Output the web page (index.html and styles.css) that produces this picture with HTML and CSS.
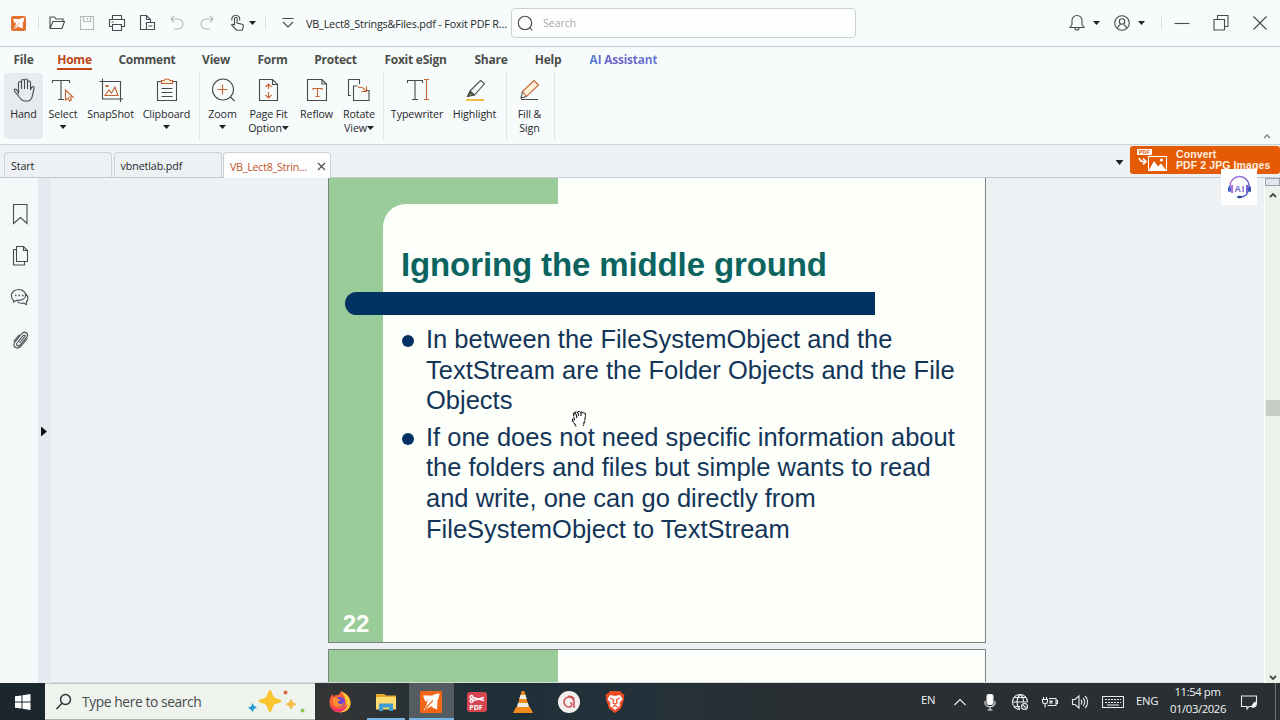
FILE: index.html
```
<!DOCTYPE html>
<html lang="en">
<head>
    <meta charset="UTF-8">
    <meta name="viewport" content="width=device-width, initial-scale=1.0">
    <title>VB_Lect8_Strings&amp;Files.pdf - Foxit PDF Reader</title>
    <link rel="stylesheet" href="styles.css">
</head>
<body>
    <header class="titlebar">
        <svg class="logo" width="15" height="15" viewBox="1 1 22 22"><rect x="1" y="1" width="22" height="22" rx="3" fill="#e2712f"/><path d="M20.500 3.500C13 4 8 8 8 14l-3.500 6.500L11 17c6-2 9-7 9.500-13.500zM4 5.500h8.500L6.500 12zM18.500 11.500L18 19.500l-5.500-2.500z" fill="#fff"/><path d="M6 19l8-8.500" stroke="#e2712f"/></svg>
        <span class="sep"></span>
        <div class="quick">
            <svg width="18" height="18" viewBox="0 0 18 18"><path d="M2 14.500V3h4.500l1.500 2h7v2.500M2 14.500L5 7.500h11.500L14 14.500z"/></svg>
            <svg class="off" width="18" height="18" viewBox="0 0 18 18"><path d="M2.500 2.500h13v13h-13zM5.500 2.500v5h7v-5M9.500 4v2"/></svg>
            <svg width="18" height="18" viewBox="0 0 18 18"><path d="M4.500 5.500v-4h9v4M4.500 12.500h-3v-7h15v7h-3M4.500 10.500h9v6h-9zM3.500 8h2"/></svg>
            <svg width="18" height="18" viewBox="0 0 18 18"><path d="M8 15.500H2.500v-14h6l4 4v3M8.500 1.500v4h4M8.500 8.500h8v7h-8zM10.500 12h4"/></svg>
            <svg class="off" width="18" height="18" viewBox="0 0 18 18"><path d="M6 2L3 5l3 3M3 5h7a5 5 0 0 1 0 10H6"/></svg>
            <svg class="off" width="18" height="18" viewBox="0 0 18 18"><path d="M12 2l3 3-3 3M15 5H8a5 5 0 0 0 0 10h4"/></svg>
            <svg width="18" height="18" viewBox="0 0 18 18"><path d="M6.500 11V4.500a1.300 1.300 0 0 1 2.600 0V9l5 1.200c1.500.4 1.400 1.500 1 3l-.8 3H8.500L3.500 11c.8-1.200 2-1 3 .5M4 6.500a4 4 0 1 1 7.600 0"/></svg>
        </div>
        <span class="caret caret-touch"></span>
        <span class="sep sep-quick"></span>
        <svg class="more" width="14" height="12" viewBox="0 0 14 12"><path d="M1.500 1.500h11M2 5l5 5 5-5"/></svg>
        <div class="doc-name">VB_Lect8_Strings&amp;Files.pdf - Foxit PDF R...</div>
        <div class="search">
            <svg width="17" height="17" viewBox="0 0 17 17"><circle cx="8" cy="8" r="6.700"/><path d="M12.800 12.800l2.500 2.500"/></svg>
            <span>Search</span>
        </div>
        <div class="account">
            <svg width="18" height="18" viewBox="0 0 18 18"><path d="M2 13.500h14l-2-3V6.500a5 5 0 0 0-10 0v4zM7 14a2 2 0 0 0 4 0"/></svg>
            <span class="caret"></span>
            <svg width="18" height="18" viewBox="0 0 18 18"><circle cx="9" cy="9" r="7.300"/><circle cx="9" cy="7.500" r="2.700"/><path d="M4.500 14c.5-2 1.500-3 3-3.600M13.500 14c-.5-2-1.500-3-3-3.600"/></svg>
            <span class="caret"></span>
        </div>
        <span class="sep"></span>
        <div class="window-buttons">
            <svg width="18" height="18" viewBox="0 0 18 18"><path d="M1.500 9.500h15"/></svg>
            <svg width="18" height="18" viewBox="0 0 18 18"><path d="M2 5.500h10.500V16H2zM5.500 5.500v-4H16v11h-3.500"/></svg>
            <svg width="18" height="18" viewBox="0 0 18 18"><path d="M2.500 2.500l13 13M15.500 2.500l-13 13"/></svg>
        </div>
    </header>

    <section class="ribbon">
        <nav class="menu">
            <span>File</span>
            <span class="current">Home</span>
            <span>Comment</span>
            <span>View</span>
            <span>Form</span>
            <span>Protect</span>
            <span>Foxit eSign</span>
            <span>Share</span>
            <span>Help</span>
            <span class="ai">AI Assistant</span>
        </nav>
        <div class="tools">
            <div class="group group-basic">
                <div class="tool selected">
                    <svg width="26" height="26" viewBox="0 0 26 26"><path d="M7.500 16V6a1.500 1.500 0 0 1 3 0v6V4a1.500 1.500 0 0 1 3 0v8V3.500a1.500 1.500 0 0 1 3 0V12V5.500a1.500 1.500 0 0 1 3 0V13l1-2.500c1-1.500 3-.8 2.500.8l-1.500 7c-.8 4-2.500 5.700-5 5.700h-3c-2 0-3-.8-4.500-3l-5.500-7c-.8-1.500.7-2.500 2-1.500z"/></svg>
                    <span>Hand</span>
                </div>
                <div class="tool">
                    <svg width="26" height="26" viewBox="0 0 26 26"><path d="M2.500 6V3.500h17V6M11 3.500v19M8 22.500h6"/><path class="accent" d="M15.500 13v10l2.500-2 1.500 3 2-1-1.500-3h3z"/></svg>
                    <span>Select</span>
                    <i class="caret"></i>
                </div>
                <div class="tool">
                    <svg width="26" height="26" viewBox="0 0 26 26"><path d="M1.500 4.500h21V25M4.500 1.500v20.500H25"/><path class="accent" d="M7 18.500l4-5.500 2.500 3 3.500-6 3 8.500zM8 8.500h2v1H8z"/></svg>
                    <span>SnapShot</span>
                </div>
                <div class="tool">
                    <svg width="26" height="26" viewBox="0 0 26 26"><path d="M7.500 4.500h-4v19h19v-19h-4M7.500 11.500h11M7.500 15.500h11M7.500 19.500h11"/><path class="accent peach" d="M7.500 6.500V3.500H10c.5-2 5.500-2 6 0h2.500v3z"/></svg>
                    <span>Clipboard</span>
                    <i class="caret"></i>
                </div>
            </div>
            <div class="group group-view">
                <div class="tool">
                    <svg width="26" height="26" viewBox="0 0 26 26"><circle cx="13" cy="12.500" r="10.500"/><path d="M20.500 20l4 4"/><path class="accent" d="M12.500 7.500v10M7.500 12.500h10"/></svg>
                    <span>Zoom</span>
                    <i class="caret"></i>
                </div>
                <div class="tool">
                    <svg width="26" height="26" viewBox="0 0 26 26"><path d="M3.500 2.500h13l5 5v16h-18zM16.500 2.500v5h5"/><path class="accent" d="M12.500 7v5M9.500 10l3-3 3 3M12.500 15v6M9.500 18l3 3 3-3"/></svg>
                    <span>Page Fit<br>Option<i class="caret"></i></span>
                </div>
                <div class="tool">
                    <svg width="26" height="26" viewBox="0 0 26 26"><path d="M3.500 2.500h14.500l4.500 4.500v16.500h-19zM18 2.500v4.500h4.500"/><path class="accent" d="M9 13V11.500h9V13M13.500 11.500v8M11.500 19.500h4"/></svg>
                    <span>Reflow</span>
                </div>
                <div class="tool">
                    <svg width="26" height="26" viewBox="0 0 26 26"><path d="M5 18.500H2.500V2.500h11V7M7.500 13V23.500h15.500V13.500h-3M7.500 13V9h4"/><path class="accent" d="M12 10.500c4-1 6 .5 7.500 3.500M20.500 9.500v5h-5"/></svg>
                    <span>Rotate<br>View<i class="caret"></i></span>
                </div>
            </div>
            <div class="group group-text">
                <div class="tool">
                    <svg width="26" height="26" viewBox="0 0 26 26"><path d="M3.500 6V3.500h15V6M11 3.500v19M8 22.500h6"/><path class="accent" d="M20 2.500h5M22.500 2.500v20M20 22.500h5"/></svg>
                    <span>Typewriter</span>
                </div>
                <div class="tool">
                    <svg width="26" height="26" viewBox="0 0 26 26"><path d="M8 14L18.500 3.500l4 3L12.500 18zM8 14l-2.500 5.500 7-1.500"/><path d="M6 19l2-4 3 3z" fill="#b5a92d"/><path d="M4 23h18" stroke="#edbb43" stroke-width="2"/></svg>
                    <span>Highlight</span>
                </div>
            </div>
            <div class="group group-sign">
                <div class="tool">
                    <svg width="26" height="26" viewBox="0 0 26 26"><path class="accent peach" d="M5.500 14.500L17 3.500l4.500 4.500L9.500 19.500z"/><path d="M5.500 14.500l-1.500 6.500 5.500-1.500M4 22.500h17"/></svg>
                    <span>Fill &amp;<br>Sign</span>
                </div>
            </div>
            <svg class="collapse" width="10" height="8" viewBox="0 0 10 8"><path d="M2 6l3-3 3 3"/></svg>
        </div>
    </section>

    <div class="tabs">
        <div class="tab">Start</div>
        <div class="tab">vbnetlab.pdf</div>
        <div class="tab active">
            <span>VB_Lect8_Strin...</span>
            <svg width="9" height="9" viewBox="0 0 9 9"><path d="M1 1l7 7M8 1L1 8"/></svg>
        </div>
        <span class="caret"></span>
        <div class="promo">
            <svg width="32" height="24" viewBox="0 0 32 24"><rect y="1" width="15" height="6" rx="1" fill="#fff"/><text x="1.800" y="6">PDF</text><path d="M2 10c1 3 3 4 6 3.500M6 10.500l3 3-3 3" fill="none" stroke="#fff" stroke-width="1.600"/><rect x="11.500" y="8.500" width="18" height="14" fill="none" stroke="#fff"/><path d="M12 22l5-9 4 5.500 3-3 5 6.500z" fill="#fff"/><circle cx="24.500" cy="12" r="1.600" fill="#fff"/></svg>
            <div class="promo-text"><span>Convert</span><span>PDF 2 JPG Images</span></div>
            <div class="ai-badge">
                <svg width="26" height="26" viewBox="0 0 26 26"><defs><linearGradient id="ai" x2="1" y2="1"><stop stop-color="#bd77dc"/><stop offset="1" stop-color="#3858c7"/></linearGradient></defs><path d="M4 12a9.500 9.500 0 0 1 19 0M22 16c0 4-3 7-8 7" fill="none" stroke="url(#ai)" stroke-width="1.600"/><rect x="2" y="12" width="3" height="6" rx="1.500" fill="#4668cb"/><rect x="22" y="12" width="3" height="6" rx="1.500" fill="#3850ba"/><rect x="5" y="11" width="2" height="8" fill="#ae73d8"/><rect x="20" y="11" width="2" height="8" fill="#7c5ed4"/><ellipse cx="13.500" cy="23" rx="2.500" ry="1.300" fill="#2c458f"/><text x="8.600" y="18.300">AI</text></svg>
            </div>
        </div>
    </div>

    <main class="viewer">
        <aside class="sidebar">
            <svg width="20" height="22" viewBox="0 0 20 22"><path d="M3.500 1.500h13.500v19l-6.500-6-7 6z"/></svg>
            <svg width="20" height="22" viewBox="0 0 20 22"><path d="M6.500 1.500h7l4 4V16.500h-11zM13.500 1.500v4h4M6.500 4.500h-3v15.500H14.500V17"/></svg>
            <svg width="20" height="22" viewBox="0 0 20 22"><path d="M3.500 13.500c-3-3-2.800-7.200.5-9.500 4-2.800 10-1.500 11.500 3 1 4-3 6.800-9 6.300L3.500 15zM15.800 7c3 2.500 2.500 6 .5 8v2.500l-3-1.500c-3 .7-4.700 0-6-1.500"/><path d="M5 8.500h1.500M8.500 8.500h1.500M12 8.500h1.500" stroke-width="1.500"/></svg>
            <svg width="20" height="22" viewBox="0 0 20 22"><path d="M17.500 9.500l-7 8c-3.500 3.500-8.500 0-5.700-4.300L12 4.500c2.800-3 7.200 0 5 3.500l-7 8c-2 2-4.500 0-3-2l6.500-7.500c1-1 2.500 0 1.500 1.200l-5.500 6.300M3.500 12.500l6-6.800"/></svg>
        </aside>
        <div class="splitter"><span></span></div>
        <div class="canvas">
            <article class="slide">
                <div class="slide-top"></div>
                <div class="slide-body">
                    <div class="slide-number">22</div>
                    <div class="slide-content">
                        <h1>Ignoring the middle ground</h1>
                        <div class="rule"></div>
                        <ul>
                            <li>In between the FileSystemObject and the<br>TextStream are the Folder Objects and the File<br>Objects</li>
                            <li>If one does not need specific information about<br>the folders and files but simple wants to read<br>and write, one can go directly from<br>FileSystemObject to TextStream</li>
                        </ul>
                        <svg class="cursor" width="18" height="18" viewBox="0 0 18 18"><path d="M5 16.500c0-2-3-4-3.500-6-.3-1.500 1-2 2-.5L2.500 5c-.3-2 1.500-2.500 2-.8L3.800 3.500C4 1.500 6 1.300 6.500 3c.3-2 2.800-2 3 0 .5-1.600 2.700-1.300 2.700.5 1.200-1 2.800-.2 2.300 1.500l-.6 5c-.5 2-1.400 3.500-1.400 6" stroke-dasharray="4 .6"/><path d="M5 4l1 4M7 3l.7 3M10 3v3"/></svg>
                    </div>
                </div>
            </article>
            <article class="slide next"><div class="slide-top"></div></article>
        </div>
        <div class="scrollbar">
            <div class="split-box"></div>
            <svg width="10" height="8" viewBox="0 0 10 8"><path d="M2 6l3-3 3 3"/></svg>
            <div class="thumb"></div>
            <svg width="10" height="8" viewBox="0 0 10 8"><path d="M2 2l3 3 3-3"/></svg>
        </div>
    </main>

    <footer class="taskbar">
        <div class="start">
            <svg width="16" height="16" viewBox="0 0 16 16"><path d="M0 2.300L6.500 1.400v6.100H0zM7.500 1.200L15.500 0v7.500h-8zM0 8.500h6.500v6.100L0 13.700zM7.500 8.500h8V16l-8-1.200z" fill="#fff"/></svg>
        </div>
        <div class="task-search">
            <svg width="18" height="18" viewBox="0 0 18 18"><circle cx="10.500" cy="6.500" r="5"/><path d="M7 10.200L1.500 16"/></svg>
            <span>Type here to search</span>
            <svg class="sparkles" width="58" height="26" viewBox="0 0 58 26"><path d="M22 1c2 0 2.500 6 4.500 7.500s7 1.500 7 3.500-5 2-7 3.500-2.500 7.500-4.500 7.500-2.500-6-4.500-7.500-7-1.500-7-3.500 5-2 7-3.500 2.500-7.500 4.500-7.500z" fill="#f9c62f"/><path d="M43 10c1.300 0 1.200 2.700 2.200 3.400s3 .8 3 1.800-2 1.100-3 1.800-.9 3.200-2.200 3.200-1.200-2.500-2.200-3.200-3-.8-3-1.800 2-1.100 3-1.800.9-3.400 2.200-3.400z" fill="#f4bd48"/><path d="M4.500 14l1.500 2.700 3 1.800-3 1.500-1.500 3-1.800-2.500-2.700-2 3-1z" fill="#279bd3"/><circle cx="37.500" cy="3.500" r="1.900" fill="#da6543"/><circle cx="54.500" cy="21.500" r="2" fill="#8fc65a"/></svg>
        </div>
        <div class="apps">
            <div class="app">
                <svg width="24" height="24" viewBox="0 0 24 24"><path d="M12 22.500C5 22.500 1.500 17.500 1.500 12c0-3 1-6 3-8l1 3 2-2c2 0 3 0 4-1l1-2.500c5 1 9.500 5 10 10 .5 6.500-4 11-10.500 11z" fill="#fa6038"/><path d="M13 1c6 3 9.500 7 9.500 12 0 6-5 9.500-10.500 9.500 8-4 8-12 1-21.500z" fill="#ffca3a"/><path d="M2 14c3 6 14 8 18-1-2 11-15 12-18 1z" fill="#f02b72"/><circle cx="12" cy="12" r="5" fill="#7049cf"/><path d="M5 8c3-1 4 0 5 1 3 0 2 2-.5 3 1 3 5 3 7 0-1 6-10 6-11.500 1z" fill="#ff9030"/></svg>
            </div>
            <div class="app open">
                <svg width="24" height="24" viewBox="0 0 24 24"><path d="M2 4h8l2 1.500h10V9H2z" fill="#e6a82c"/><path d="M2 7h20v12.500H2z" fill="#ffdb72"/><path d="M5 13.500h14V21h-4v-3.500H9V21H5z" fill="#3d9dd0"/></svg>
            </div>
            <div class="app open focused">
                <svg width="24" height="24" viewBox="0 0 24 24"><rect x="1" y="1" width="22" height="22" rx="1" fill="#f26516"/><path d="M20.500 3.500C13 4 8 8 8 14l-3.500 6.500L11 17c6-2 9-7 9.500-13.500zM4 5.500h8.500L6.500 12zM18.500 11.500L18 19.500l-5.500-2.500z" fill="#fff"/><path d="M6 19l8-8.500" stroke="#f26516"/></svg>
            </div>
            <div class="app">
                <svg width="24" height="24" viewBox="0 0 24 24"><rect x="2" y="2" width="20" height="20" rx="3" fill="#d84550"/><g fill="none" stroke="#fff" stroke-width="1.300"><circle cx="6.500" cy="7" r="1.500"/><circle cx="6.500" cy="11" r="1.500"/><path d="M8 7.500l11 3M8 10.500l11-3"/></g><text class="pdf-label" x="4.300" y="20">PDF</text></svg>
            </div>
            <div class="app">
                <svg width="24" height="24" viewBox="0 0 24 24"><path d="M5 17h14l3 6H2z" fill="#f08a1c"/><path d="M10.700 1h2.600L18.500 19c-3 2-10 2-13 0z" fill="#f28b1f"/><path d="M9.500 5h5l1.200 4H8.300zM7 13h10l1 4H6z" fill="#eeeee6"/></svg>
            </div>
            <div class="app">
                <svg width="24" height="24" viewBox="0 0 24 24"><circle cx="12" cy="12" r="11" fill="#f3efed"/><path d="M17 18V12a5 5 0 1 0-5 5c3 0 4-3 1.500-4.500M17 10c0-3-3-4-6-3.500" fill="none" stroke="#d25157" stroke-width="1.600"/></svg>
            </div>
            <div class="app">
                <svg width="24" height="24" viewBox="0 0 24 24"><path d="M7 1h10l2 2.500 2.500 1-.8 3 .3 2-3 9-6 4.500-6-4.500-3-9 .3-2-.8-3 2.500-1z" fill="#f04d27"/><path d="M7 5l5 1 5-1 2.500 4-3 4 .5 3-5 4-5-4 .5-3-3-4z" fill="#fff"/><path d="M7 8l3.500 1.500L10 13l2 1 2-1-.5-3.500L17 8M9.500 17l2.500-1.500 2.500 1.500" fill="none" stroke="#f04d27" stroke-width="1.200"/></svg>
            </div>
        </div>
        <div class="tray">
            <span class="lang">EN</span>
            <svg width="18" height="18" viewBox="0 0 18 18"><path d="M3.500 12L9 6.500l5.500 5.500"/></svg>
            <svg width="18" height="18" viewBox="0 0 18 18"><rect x="6" y="1.500" width="6" height="10" rx="1.500" fill="#fff"/><path d="M4 8v2c0 5 10 5 10 0V8M9 14v3M6.500 17h5"/></svg>
            <svg width="18" height="18" viewBox="0 0 18 18"><path d="M9 16.500A7.500 7.500 0 1 1 16.500 9M1.500 9h15M3 4.500h12M3 13.500h6M9 1.500c-4 4-4 11 0 15M9 1.500c3 2 3.500 5 3.500 7"/><circle cx="13.500" cy="13.500" r="3"/><path d="M11.500 11.500l4 4"/></svg>
            <svg width="18" height="18" viewBox="0 0 18 18"><path d="M2.500 4v2.500M5.500 4v2.500M1.500 6.500h5v2c0 3-5 3-5 0zM4 11v3.500M8 5.500h7v7H6.500M15 7.500h1.500v3H15M8.500 7.500l3 3M11.500 7.500l-3 3"/></svg>
            <svg width="18" height="18" viewBox="0 0 18 18"><path d="M1.500 6.500h2.500l4-3.500v12l-4-3.500H1.500zM10 7c1 1 1 3 0 4.500M12 5c2.300 2 2.300 6 0 8M14 3c3.500 3 3.500 9 0 12"/></svg>
            <svg class="keyboard" width="22" height="14" viewBox="0 0 22 14"><path d="M.5 1.500h21v11H.5zM5 10h12"/><path d="M3 4.500h16M3 7.500h16" stroke-dasharray="2 1"/></svg>
            <span class="lang eng">ENG</span>
            <div class="clock">11:54 pm<br>01/03/2026</div>
            <svg width="18" height="18" viewBox="0 0 18 18"><path d="M12 13.500H9l-2 2.500v-2.500H1.500V3h15v6"/><path d="M12 14c0-2 2-5 4.500-5 .5 3-1 6-4.500 5z" fill="#fff"/></svg>
        </div>
        <div class="show-desktop"></div>
    </footer>
</body>
</html>
```
FILE: styles.css
```
* {
    box-sizing: border-box;
}
body {
    margin: 0;
    width: 1280px;
    height: 720px;
    overflow: hidden;
    display: flex;
    flex-direction: column;
    font-family: "Open Sans", "Noto Sans", sans-serif;
    font-size: 11px;
    color: #252829;
    background-color: #f8fbfb;
}
svg {
    flex-shrink: 0;
    fill: none;
    stroke: #474b4d;
    stroke-width: 1.1;
}
.caret {
    display: inline-block;
    flex-shrink: 0;
    width: 7px;
    height: 4px;
    background-color: #222;
    clip-path: polygon(0 0, 100% 0, 50% 100%);
}
.sep {
    width: 1px;
    height: 14px;
    background-color: #dfe3e5;
}

/* title bar */
.titlebar {
    height: 47px;
    flex-shrink: 0;
    display: flex;
    align-items: center;
    padding-left: 11px;
    border-bottom: 1px solid #c3c8d0;
}
.logo {
    stroke: none;
    margin-right: 12px;
}
.quick {
    display: flex;
    gap: 12px;
    margin-left: 9px;
}
.quick .off {
    stroke: #b4b9ba;
}
.caret-touch {
    margin-left: 3px;
}
.sep-quick {
    margin: 0 15px 0 9px;
}
.doc-name {
    width: 205px;
    margin-left: 11px;
    white-space: nowrap;
    font-size: 10.8px;
    font-weight: 500;
    letter-spacing: -0.17px;
}
.search {
    width: 345px;
    height: 30px;
    display: flex;
    align-items: center;
    gap: 9px;
    padding-left: 5px;
    border: 1px solid #cbd0d5;
    border-radius: 4px;
    background-color: #fdfffe;
    color: #a8abab;
    font-size: 10.5px;
}
.account {
    display: flex;
    align-items: center;
    gap: 7px;
    margin: 0 16px 0 212px;
}
.account .caret:nth-child(2) {
    margin-right: 6px;
}
.window-buttons {
    display: flex;
    gap: 21px;
    margin-left: 11px;
}

/* ribbon */
.ribbon {
    height: 98px;
    flex-shrink: 0;
    border-bottom: 1px solid #cdd2d5;
}
.menu {
    height: 25px;
    display: grid;
    grid-template-columns: 17px 35px 56px 28px 31px 41px 65px 32px 28px 69px;
    column-gap: 27px;
    padding-left: 13px;
    align-items: center;
    justify-items: center;
    white-space: nowrap;
    font-size: 12px;
    font-weight: 700;
    letter-spacing: -0.25px;
    color: #4b4e49;
}
.menu span:first-child {
    margin-left: 4px;
}
.menu .current {
    color: #bd4614;
    line-height: 16px;
    border-bottom: 2px solid #bd4614;
    margin-top: 3px;
}
.menu .ai {
    color: transparent;
    background: linear-gradient(90deg, #4a82cf, #6958c4 30%, #617bd0);
    background-clip: text;
    -webkit-background-clip: text;
}
.tools {
    height: 72px;
    display: flex;
    padding-left: 4px;
}
.group {
    height: 69px;
    display: grid;
    border-right: 1px solid #e2e6e8;
}
.group-basic {
    width: 196px;
    grid-template-columns: 39px 40px 55px 57px;
}
.group-view {
    width: 184px;
    grid-template-columns: 45px 47px 49px 36px;
}
.group-text {
    width: 123px;
    padding-left: 4px;
    grid-template-columns: 58px 57px;
}
.group-sign {
    width: 48px;
    padding-left: 3px;
    grid-template-columns: 39px;
}
.tool {
    height: 66px;
    margin-top: 1px;
    padding-top: 4px;
    display: flex;
    flex-direction: column;
    align-items: center;
    border-radius: 4px;
    text-align: center;
    white-space: nowrap;
    font-size: 10.7px;
    font-weight: 500;
    line-height: 14px;
    letter-spacing: -0.1px;
}
.tool > span {
    margin-top: 4px;
}
.tool > .caret {
    margin-top: 4px;
}
.tool span .caret {
    vertical-align: 2px;
}
.selected {
    background-color: #e7eaef;
}
.accent {
    stroke: #c86331;
}
.peach {
    fill: #fff0dc;
}
.collapse {
    margin: 60px 8px 0 auto;
    stroke: #888;
    stroke-width: 1.5;
}

/* document tabs */
.tabs {
    height: 33px;
    flex-shrink: 0;
    display: flex;
    align-items: flex-end;
    gap: 1.5px;
    padding-left: 4px;
    background-color: #eef1f3;
    border-bottom: 1px solid #c5cad3;
}
.tab {
    width: 108px;
    height: 25px;
    padding: 2px 6px 0;
    display: flex;
    align-items: center;
    justify-content: space-between;
    border: 1px solid #ccd1d5;
    border-bottom: none;
    border-radius: 4px 4px 0 0;
    font-size: 10.7px;
    font-weight: 500;
    letter-spacing: -0.1px;
    white-space: nowrap;
}
.tab.active {
    height: 26px;
    margin-bottom: -1px;
    padding-right: 4px;
    background-color: #fdfffe;
    color: #c25426;
    letter-spacing: -0.25px;
}
.tabs > .caret {
    width: 8px;
    height: 5px;
    margin: 0 5px 12px auto;
}
.promo {
    position: relative;
    width: 150px;
    height: 28px;
    margin-bottom: 3px;
    padding-left: 7px;
    display: flex;
    align-items: center;
    gap: 7px;
    border-radius: 3px;
    background-color: #e55b05;
    color: #fff0e0;
    white-space: nowrap;
}
.promo-text {
    display: flex;
    flex-direction: column;
    font: bold 10.5px/11px "Liberation Sans", sans-serif;
    letter-spacing: 0.1px;
}
.promo svg {
    stroke: none;
}
.promo text {
    font: bold 5.5px "Liberation Sans", sans-serif;
    fill: #e55b05;
}
.ai-badge {
    position: absolute;
    left: 91px;
    top: 23px;
    width: 36px;
    height: 36px;
    padding: 5px;
    background-color: #fff;
    z-index: 2;
}
.promo .ai-badge text {
    font-size: 9px;
    letter-spacing: 0.6px;
    fill: #7466cf;
}

/* viewer */
.viewer {
    height: 505px;
    flex-shrink: 0;
    display: flex;
    background-color: #eef1f3;
}
.sidebar {
    width: 38px;
    display: flex;
    flex-direction: column;
    gap: 20px;
    padding: 25px 0 0 10px;
    background-color: #f5f8f9;
}
.splitter {
    width: 13px;
    display: flex;
    align-items: center;
    padding: 2px 0 0 3px;
    background-color: #e6e9ef;
}
.splitter span {
    width: 6px;
    height: 10px;
    background-color: #111;
    clip-path: polygon(0 0, 100% 50%, 0 100%);
}
.canvas {
    width: 1213px;
    padding-left: 277px;
    overflow: hidden;
    border-bottom: 1px solid #d5d9dc;
}
.slide {
    width: 658px;
    height: 465px;
    border: 1px solid #7c8280;
    border-top: none;
    background: linear-gradient(90deg, #99cc99 120px, #fdfffb 120px);
}
.slide-top {
    width: 656px;
    height: 26px;
    background: linear-gradient(90deg, #99cc99 229px, #fdfffb 229px);
}
.slide-body {
    display: flex;
    height: 438px;
}
.slide-number {
    width: 54px;
    padding-bottom: 3px;
    align-self: flex-end;
    text-align: center;
    color: #fdfffb;
    font: bold 24px/30px "Liberation Sans", Arial, sans-serif;
}
.slide-content {
    position: relative;
    flex: 1;
    padding: 41px 0 0 18px;
    border-top-left-radius: 23px;
    background-color: #fdfffb;
    color: #133558;
    font-family: "Liberation Sans", Arial, sans-serif;
}
.slide h1 {
    margin: 0;
    height: 47px;
    color: #0b6460;
    font-size: 33px;
    line-height: 40px;
    letter-spacing: -0.12px;
    white-space: nowrap;
}
.rule {
    width: 530px;
    height: 23px;
    margin-left: -56px;
    border-radius: 12px 0 0 12px;
    background-color: #003262;
}
.slide ul {
    margin: 0;
    padding: 9px 0 0 25px;
    list-style: none;
    font-size: 25.5px;
    line-height: 30.6px;
    white-space: nowrap;
}
.slide li {
    margin-bottom: 6px;
}
/* round bullet hanging in the left padding */
.slide li::before {
    content: "";
    display: inline-block;
    width: 12px;
    height: 12px;
    margin: 0 12px 0 -24px;
    border-radius: 50%;
    background-color: #003262;
    vertical-align: 1px;
}
.cursor {
    position: absolute;
    left: 188px;
    top: 206px;
    fill: #fff;
    stroke: #111;
}
.slide.next {
    height: 60px;
    margin-top: 6px;
    border-top: 1px solid #7c8280;
    background: #fdfffb;
}
.next .slide-top {
    height: 60px;
}
.scrollbar {
    width: 16px;
    display: flex;
    flex-direction: column;
    align-items: center;
    border-left: 1px solid #fff;
    background-color: #edf1ec;
}
.scrollbar svg {
    stroke: #454849;
    stroke-width: 1.8;
}
.split-box {
    width: 15px;
    height: 8px;
    margin-bottom: 5px;
    border: 1px solid #9ba1ae;
    background-color: #e1e5ec;
}
.thumb {
    width: 14px;
    height: 16px;
    margin: 201px 0 auto;
    background-color: #c7ccc7;
}
.scrollbar svg:last-child {
    margin-bottom: 1px;
}

/* taskbar */
.taskbar {
    height: 37px;
    flex-shrink: 0;
    display: flex;
    background: linear-gradient(90deg, #323435 340px, #1e2f37 500px, #25313a 650px, #292f32 800px);
    color: #f2f4f4;
}
.taskbar svg {
    stroke: none;
}
.start {
    width: 45px;
    display: flex;
    align-items: center;
    justify-content: center;
    background-color: #1b272d;
}
.task-search {
    width: 270px;
    display: flex;
    align-items: center;
    padding-left: 10px;
    border-top: 1px solid #c2c6c3;
    border-bottom: 1px solid #aeb3ae;
    background-color: #eff3ee;
    color: #474c4d;
    font-size: 13.8px;
    letter-spacing: -0.4px;
    white-space: nowrap;
}
.task-search svg:first-child {
    stroke: #2b2f30;
    stroke-width: 1.4;
}
.task-search span {
    width: 120px;
    margin: 0 46px 0 9px;
}
.apps {
    display: flex;
    padding-left: 2px;
}
.app {
    width: 45.8px;
    display: flex;
    align-items: center;
    justify-content: center;
}
.app.open {
    background: linear-gradient(#78b5e7, #78b5e7) center bottom / 38px 2px no-repeat;
}
.app.focused {
    background-color: #555c61;
    background-size: 46px 2px;
}
.pdf-label {
    fill: #fff;
    font-size: 7px;
    font-weight: bold;
}
.tray {
    display: flex;
    align-items: center;
    gap: 12px;
    margin-left: auto;
}
.tray svg {
    stroke: #e9eded;
    stroke-width: 1.1;
}
.tray .keyboard {
    margin-left: 1px;
}
.lang {
    width: 16px;
    margin-right: 2px;
    padding-bottom: 5px;
    font-size: 11.3px;
    letter-spacing: -0.3px;
}
.lang.eng {
    width: 22px;
    margin-right: 0;
    padding-bottom: 2px;
}
.clock {
    width: 55px;
    padding-bottom: 3px;
    text-align: center;
    font-size: 11.3px;
    line-height: 17px;
    letter-spacing: -0.4px;
}
.tray svg:last-child {
    margin-left: 3px;
}
.show-desktop {
    width: 5px;
    margin-left: 17px;
    border-left: 1px solid #697174;
}
```
